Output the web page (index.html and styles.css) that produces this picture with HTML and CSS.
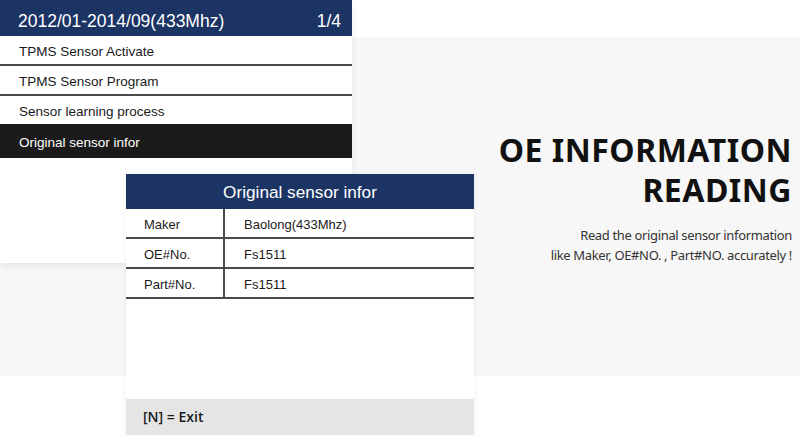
FILE: index.html
```html
<!DOCTYPE html>
<html lang="en">
<head>
  <meta charset="UTF-8" />
  <meta name="viewport" content="width=device-width, initial-scale=1.0"/>
  <title>OE Information Reading</title>
  <link rel="stylesheet" href="styles.css">
</head>
<body>
  <div class="stage">
    <div class="band"></div>

    <div class="menu-card">
      <div class="screen-header">
        <span>2012/01-2014/09(433Mhz)</span>
        <span>1/4</span>
      </div>
      <div class="menu-item">TPMS Sensor Activate</div>
      <div class="menu-item">TPMS Sensor Program</div>
      <div class="menu-item last">Sensor learning process</div>
      <div class="menu-item selected">Original sensor infor</div>
    </div>

    <div class="info-card">
      <div class="info-title">Original sensor infor</div>
      <div class="info-row">
        <div class="info-key">Maker</div>
        <div class="info-value">Baolong(433Mhz)</div>
      </div>
      <div class="info-row">
        <div class="info-key">OE#No.</div>
        <div class="info-value">Fs1511</div>
      </div>
      <div class="info-row">
        <div class="info-key">Part#No.</div>
        <div class="info-value">Fs1511</div>
      </div>
      <div class="info-spacer"></div>
      <div class="info-footer">[N] = Exit</div>
    </div>

    <div class="feature">
      <h1>OE INFORMATION<br>READING</h1>
      <p>Read the original sensor information<br>like Maker, OE#NO. , Part#NO. accurately !</p>
    </div>
  </div>
</body>
</html>
```

FILE: styles.css
```css
body {
  margin: 0;
  background-color: #ffffff;
  font-family: "Liberation Sans", Arial, sans-serif;
}

.stage {
  display: grid;
  grid-template-columns: 126px 226px 122px 326px;
  grid-template-rows: 37px 137px 89px 113px 62px;
  width: 800px;
  height: 438px;
  overflow: hidden;
}

.band {
  grid-column: 1 / -1;
  grid-row: 2 / 5;
  background-color: #f7f7f7;
}

/* first screen: menu */
.menu-card {
  grid-column: 1 / 3;
  grid-row: 1 / 4;
  background-color: #ffffff;
  box-shadow: 0 3px 8px rgba(0,0,0,0.07);
}

.screen-header {
  display: flex;
  justify-content: space-between;
  height: 36px;
  padding: 6px 11px 0 18px;
  box-sizing: border-box;
  line-height: 30px;
  font-size: 17.5px;
  color: #ffffff;
  background-color: #1c3464;
}

.menu-item {
  height: 30px;
  box-sizing: border-box;
  padding: 4px 0 0 19px;
  line-height: 24px;
  font-size: 13.5px;
  color: #1a1a1a;
  border-bottom: 2px solid #4a4a4a;
}

.menu-item.last {
  height: 28px;
  border-bottom: none;
}

.menu-item.selected {
  height: 34px;
  line-height: 30px;
  border-bottom: none;
  color: #ffffff;
  background-color: #1b1b1b;
}

/* second screen: sensor info */
.info-card {
  grid-column: 2 / 4;
  grid-row: 3 / 6;
  display: flex;
  flex-direction: column;
  padding-bottom: 3px;
  box-sizing: border-box;
  background-color: #ffffff;
  box-shadow: 0 0 6px rgba(0,0,0,0.06);
}

.info-title {
  height: 35px;
  padding-top: 1px;
  box-sizing: border-box;
  line-height: 34px;
  text-align: center;
  font-size: 17.2px;
  color: #ffffff;
  background-color: #1c3464;
}

.info-row {
  display: flex;
  height: 30px;
  box-sizing: border-box;
  font-size: 13px;
  color: #1a1a1a;
  border-bottom: 2px solid #4a4a4a;
}

.info-key {
  width: 99px;
  padding: 4px 0 0 18px;
  box-sizing: border-box;
  line-height: 24px;
  border-right: 2px solid #4a4a4a;
}

.info-value {
  padding: 4px 0 0 19px;
  line-height: 24px;
}

.info-spacer {
  flex: 1;
}

.info-footer {
  height: 36px;
  padding-left: 17px;
  line-height: 36px;
  font-family: "Open Sans", sans-serif;
  font-size: 14px;
  font-weight: 600;
  color: #1a1a1a;
  background-color: #e5e5e5;
}

/* right side text */
.feature {
  grid-column: 4;
  grid-row: 2 / 5;
  padding: 93px 8px 0 0;
  text-align: right;
  font-family: "Noto Sans", sans-serif;
}

.feature h1 {
  margin: 0;
  font-size: 32px;
  line-height: 40px;
  font-weight: 700;
  letter-spacing: 0.5px;
  color: #111111;
}

.feature p {
  margin: 15px 0 0;
  font-size: 13px;
  line-height: 20px;
  letter-spacing: -0.35px;
  color: #333333;
}
```
